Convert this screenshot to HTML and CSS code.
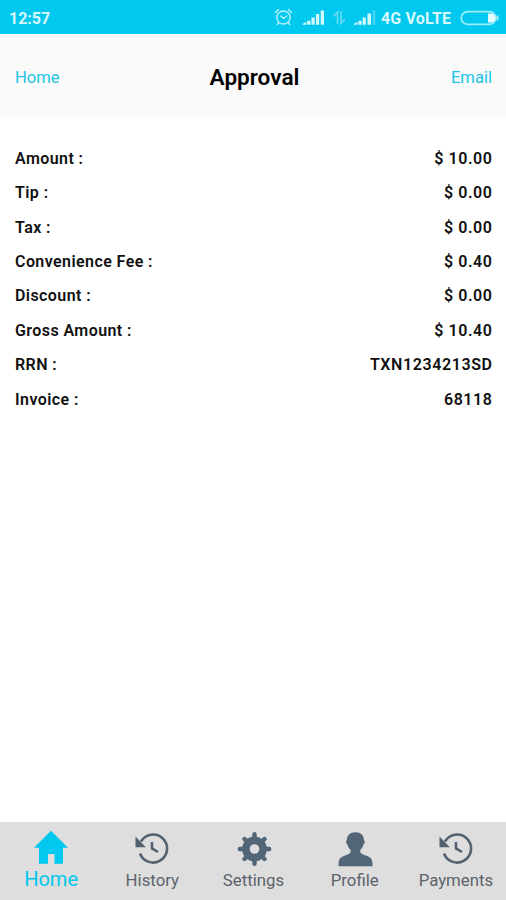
FILE: index.html
```html
<!DOCTYPE html>
<html lang="en">
<head>
<meta charset="utf-8">
<title>Approval</title>
<link rel="stylesheet" href="styles.css">
</head>
<body>
<div class="screen">
  <div class="status">
    <span class="clock">12:57</span>
    <svg class="status-icons" width="106" height="20" viewBox="0 0 106 20" fill="none">
      <g stroke="#b5f1fb" stroke-width="1.500" stroke-linecap="round">
        <circle cx="9.500" cy="9.500" r="6.600"/>
        <path d="M1.500 4.500l3-3M17.500 4.500l-3-3M4.800 14.600l-1.600 1.800M14.200 14.600l1.600 1.800M6.800 8l2.800 2.500 3-2.500"/>
      </g>
      <path fill="#d5f8fd" d="M28.700 15.700l3.600-1.700v2.800h-3.600zM33.200 12.700h3.200v4.100h-3.200zM37.500 9.500h3.200v7.300h-3.200zM42 6h3.200v10.800H42zM46.700 2.500H50v14.300h-3.300z"/>
      <path stroke="#68dcf3" stroke-width="1.600" d="M63.500 16V4l-4 4.500M67 3v12.500l4-4.500"/>
      <path fill="#d5f8fd" d="M80 15.700l3.500-1.700v2.800H80zM84.500 12.700h3.100v4.100h-3.100zM88.700 9.500h3.100v7.300h-3.100zM93.500 5.500H97v11.300h-3.500z"/>
      <path fill="#45d5f1" d="M98.600 2.500h2.800v14.300h-2.800z"/>
    </svg>
    <span class="network">4G VoLTE</span>
    <svg class="battery" width="40" height="16" viewBox="0 0 40 16">
      <rect x="1.200" y="1.700" width="34.500" height="12.600" rx="6.300" fill="none" stroke="#9beefb" stroke-width="1.700"/>
      <path d="M28 3.500h3a4.500 4.500 0 0 1 0 9h-3z" fill="#e2fbff"/>
      <path d="M37.500 5.500v5" stroke="#b5f1fb" stroke-width="1.800"/>
    </svg>
  </div>
  <header class="bar">
    <a class="link">Home</a>
    <h1 class="title">Approval</h1>
    <a class="link link-end">Email</a>
  </header>
  <main class="details">
    <div class="row"><span>Amount :</span><span class="value">$ 10.00</span></div>
    <div class="row"><span>Tip :</span><span class="value">$ 0.00</span></div>
    <div class="row"><span>Tax :</span><span class="value">$ 0.00</span></div>
    <div class="row"><span>Convenience Fee :</span><span class="value">$ 0.40</span></div>
    <div class="row"><span>Discount :</span><span class="value">$ 0.00</span></div>
    <div class="row"><span>Gross Amount :</span><span class="value">$ 10.40</span></div>
    <div class="row"><span>RRN :</span><span class="value">TXN1234213SD</span></div>
    <div class="row"><span>Invoice :</span><span class="value">68118</span></div>
  </main>
  <nav class="tabs">
    <a class="tab active">
      <svg class="icon" viewBox="0 0 36 38"><path fill="#00c8ee" d="M18 0.800L35 17.800h-5V33.800h-8.500V24h-6.500V33.800H6V17.800H1z"/></svg>
      <span class="label">Home</span>
    </a>
    <a class="tab">
      <svg class="icon" viewBox="0 0 36 38"><path fill="none" stroke="#526170" stroke-width="2.600" d="M7 11.500A14 14 0 1 1 6 23.500M18 12v6.400l6 3.600"/><path fill="#526170" d="M1.500 6.500v10.800h10.300z"/></svg>
      <span class="label">History</span>
    </a>
    <a class="tab">
      <svg class="icon" viewBox="0 0 36 38">
        <g fill="none" stroke="#526677">
          <circle cx="18.500" cy="19" r="8.600" stroke-width="7.600"/>
          <path stroke-width="4.400" stroke-linecap="round" d="M18.500 7.500V4.300M18.500 30.500v3.200M7 19H3.800M30 19h3.200M10.500 11L8.500 9M26.500 11l2-2M10.500 27l-2 2M26.500 27l2 2"/>
        </g>
      </svg>
      <span class="label">Settings</span>
    </a>
    <a class="tab">
      <svg class="icon" viewBox="0 0 36 38"><path fill="#526677" d="M18.400 2.300c5.500 0 8.500 3.200 8.500 7.800 1.400.5 1 3.300-.3 4.200-.7 2.700-1.800 4.400-3.300 5.600v2.700c2 2.500 6.200 2.800 9.300 4.600 2.200 1.300 2.900 3.200 2.900 9h-34c0-5.800.7-7.700 2.900-9 3.100-1.800 7.200-2.100 9.200-4.600v-2.700c-1.500-1.200-2.700-2.900-3.300-5.600-1.400-.9-1.700-3.700-.4-4.200 0-4.600 3-7.800 8.500-7.800z"/></svg>
      <span class="label">Profile</span>
    </a>
    <a class="tab">
      <svg class="icon" viewBox="0 0 36 38"><path fill="none" stroke="#526170" stroke-width="2.600" d="M7 11.500A14 14 0 1 1 6 23.500M18 12v6.400l6 3.600"/><path fill="#526170" d="M1.500 6.500v10.800h10.300z"/></svg>
      <span class="label">Payments</span>
    </a>
  </nav>
</div>
</body>
</html>
```
FILE: styles.css
```css
* { box-sizing: border-box; }
body { margin: 0; font-family: Roboto, "Liberation Sans", sans-serif; background: #fff; }
.screen { display: flex; flex-direction: column; width: 506px; height: 900px; }
.status { display: flex; align-items: center; height: 34px; padding: 2px 6px 0 9px; background: #00c8ee; color: #d8f9fe; font-weight: 700; }
.clock { font-size: 16px; flex: 1; }
.status-icons { flex: none; margin-right: 1px; }
.network { width: 73px; font-size: 16px; letter-spacing: 0.15px; white-space: nowrap; }
.battery { flex: none; margin-left: 6px; }
.bar { display: grid; grid-template-columns: 1fr auto 1fr; align-items: center; height: 83px; padding: 3px 14px 0 17px; background: #fafafa; }
.link { font-size: 16.6px; color: #22c4e6; margin-left: -2px; }
.link-end { text-align: right; }
.title { margin: 0; font-size: 22.6px; font-weight: 600; color: #000; }
.details { flex: 1; padding: 24px 14px 0 15px; }
.row { display: flex; justify-content: space-between; align-items: center; height: 34.43px; font-size: 16px; font-weight: 600; letter-spacing: 0.42px; color: #111; }
.value { margin-right: -0.6px; letter-spacing: 0.6px; }
.tabs { display: flex; height: 78px; background: #dedede; }
.tab { flex: 1; display: flex; flex-direction: column; align-items: center; padding: 8px 0 0 1px; color: #5c636c; }
.icon { width: 36px; height: 38px; flex: none; }
.label { font-size: 16.8px; line-height: 24px; }
.active .label { font-size: 20px; line-height: 23px; color: #00c8ee; }
```
